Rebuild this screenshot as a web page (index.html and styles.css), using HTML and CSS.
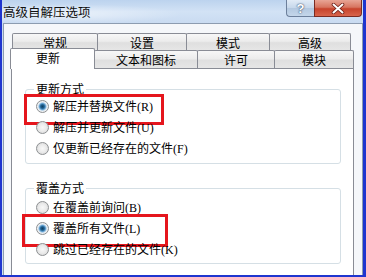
FILE: index.html
```html
<!DOCTYPE html>
<html lang="zh">
<head>
<meta charset="utf-8">
<link rel="stylesheet" href="styles.css">
</head>
<body>
<div class="window">
  <div class="titlebar">
    <span class="title">高级自解压选项</span>
    <div class="caption-buttons">
      <span class="btn btn-help">?</span>
      <span class="btn btn-close">
        <svg width="14" height="11" viewBox="0 0 14 11">
          <path d="M2.5 1.5 L11.5 9.5 M11.5 1.5 L2.5 9.5" stroke="#6b1e16" stroke-width="3.6" stroke-linecap="round"/>
          <path d="M2.5 1.5 L11.5 9.5 M11.5 1.5 L2.5 9.5" stroke="#ffffff" stroke-width="2" stroke-linecap="round"/>
        </svg>
      </span>
    </div>
  </div>
  <div class="client">
    <div class="tab-row row-back">
      <div class="tab w85">常规</div>
      <div class="tab w89">设置</div>
      <div class="tab w83">模式</div>
      <div class="tab w81">高级</div>
    </div>
    <div class="tab-row row-front">
      <div class="tab selected w81">更新</div>
      <div class="tab w103">文本和图标</div>
      <div class="tab w78">许可</div>
      <div class="tab w79">模块</div>
    </div>
    <div class="panel">
      <div class="group group-update">
        <div class="group-title">更新方式</div>
        <div class="options">
          <div class="option mark mark-one"><span class="radio checked"></span><span class="label">解压并替换文件(R)</span></div>
          <div class="option"><span class="radio"></span><span class="label">解压并更新文件(U)</span></div>
          <div class="option"><span class="radio"></span><span class="label">仅更新已经存在的文件(F)</span></div>
        </div>
      </div>
      <div class="group group-overwrite">
        <div class="group-title">覆盖方式</div>
        <div class="options">
          <div class="option"><span class="radio"></span><span class="label">在覆盖前询问(B)</span></div>
          <div class="option mark mark-two"><span class="radio checked"></span><span class="label">覆盖所有文件(L)</span></div>
          <div class="option"><span class="radio"></span><span class="label">跳过已经存在的文件(K)</span></div>
        </div>
      </div>
    </div>
  </div>
</div>
</body>
</html>
```

FILE: styles.css
```css
* { box-sizing: border-box; }

html, body {
  margin: 0;
  padding: 0;
  width: 366px;
  height: 277px;
  overflow: hidden;
  background: #c8dbf1;
}

.window {
  width: 366px;
  height: 277px;
  display: flex;
  flex-direction: column;
  border-left: 2px solid #1f35cf;
  border-right: 3px solid #1f35cf;
  border-bottom: 2px solid #1f35cf;
  background: linear-gradient(180deg, #c5d9f1 0, #d5e3f5 40%, #cfdff2 100%);
  overflow: hidden;
  font-family: "Noto Sans CJK SC", sans-serif;
  color: #000;
}

.titlebar {
  height: 23px;
  flex: none;
  display: flex;
  align-items: flex-start;
  justify-content: space-between;
  background:
    radial-gradient(ellipse 120px 10px at 60px 14px, rgba(255,255,255,0.55), rgba(255,255,255,0) 100%),
    linear-gradient(180deg, #bcd3ee 0, #d2e2f5 50%, #c9dbf1 100%);
}

.title {
  font-size: 12.5px;
  line-height: 14px;
  margin: 5px 0 0 1px;
  color: #111;
}

.caption-buttons {
  display: flex;
  margin-right: 1px;
}

.btn {
  height: 17px;
  display: flex;
  align-items: center;
  justify-content: center;
  border: 1px solid #6c7f9b;
  border-top: none;
}

.btn-help {
  width: 28px;
  border-radius: 0 0 0 4px;
  border-right: none;
  background: linear-gradient(180deg, #e1ebf6 0, #c6d7ea 50%, #b3c8e0 51%, #c4d6ea 100%);
  color: #fff;
  font-family: "Liberation Sans", sans-serif;
  font-weight: bold;
  font-size: 13px;
  line-height: 15px;
  text-shadow: 0 0 2px #3b4f6e, 0 0 1px #3b4f6e;
}

.btn-close {
  width: 48px;
  border-color: #7a2b22;
  border-radius: 0 0 4px 0;
  background: linear-gradient(180deg, #e8a595 0, #d77560 45%, #c7432c 55%, #d8654c 100%);
}

.client {
  flex: 1;
  display: flex;
  flex-direction: column;
  margin-left: 1px;
  border: 1px solid #8c9cb0;
  border-bottom: none;
  background: #f5f7fa;
  padding: 9px 8px 0 7px;
}

.tab-row {
  display: flex;
  flex: none;
  font-size: 12px;
}

.row-back {
  height: 17px;
  padding-left: 1px;
}

.row-front {
  height: 18px;
  padding-left: 1px;
  align-items: flex-end;
}

.tab {
  height: 100%;
  display: flex;
  align-items: center;
  justify-content: center;
  border: 1px solid #898c95;
  border-bottom: none;
  margin-right: -1px;
  background: linear-gradient(180deg, #f7f7f7 0, #ececec 45%, #dfdfdf 55%, #e6e6e6 100%);
  line-height: 14px;
  border-radius: 2px 2px 0 0;
}

.row-back .tab { padding-top: 1px; }

.tab.selected {
  position: relative;
  z-index: 2;
  height: 21px;
  margin: 0 -1px -1px -2px;
  width: 85px;
  background: #fff;
  padding-bottom: 3px;
  justify-content: flex-start;
  padding-left: 25px;
}

.w78 { width: 78px; }
.w79 { width: 80px; }
.w81 { width: 82px; }
.w83 { width: 84px; }
.w85 { width: 86px; }
.w89 { width: 90px; }
.w103 { width: 104px; }

.panel {
  flex: 1;
  background: #fff;
  border: 1px solid #898c95;
  border-bottom: none;
  display: flex;
  flex-direction: column;
  padding: 0 12px 0 13px;
}

.group {
  border: 1px solid #d5dfe5;
  border-radius: 3px;
  padding: 0 0 4px 10px;
}

.group-update { margin-top: 20px; }
.group-overwrite { margin-top: 24px; padding-bottom: 3px; }

.group-title {
  font-size: 12px;
  line-height: 14px;
  margin: -8px 0 0 -2px;
  padding: 0 2px;
  background: #fff;
  width: fit-content;
}

.group-overwrite .options { margin-top: 2px; }

.option {
  height: 21px;
  display: flex;
  align-items: center;
  gap: 4px;
  position: relative;
}

.label {
  font-family: "Liberation Serif", "Noto Sans CJK SC", serif;
  font-size: 12px;
  line-height: 14px;
}

.radio {
  width: 13px;
  height: 13px;
  flex: none;
  border-radius: 50%;
  border: 1px solid #8d9092;
  background: radial-gradient(circle at 50% 50%, #f8f8f8 0, #ececec 45%, #d2d2d2 100%);
}

.radio.checked {
  background: radial-gradient(circle at 50% 50%, #0f3f63 0, #1f5f8e 1.8px, #5d9ccc 3px, #a9cbe6 3.8px, #eef2f5 4.6px, #e2e2e2 100%);
}

.mark::after {
  content: "";
  position: absolute;
  border: 3px solid #e5161d;
  pointer-events: none;
}

.mark-one::after {
  top: -2px;
  left: -12px;
  width: 134px;
  height: 25px;
}

.mark-two::after {
  top: -4px;
  left: -14px;
  width: 140px;
  height: 27px;
}
```
